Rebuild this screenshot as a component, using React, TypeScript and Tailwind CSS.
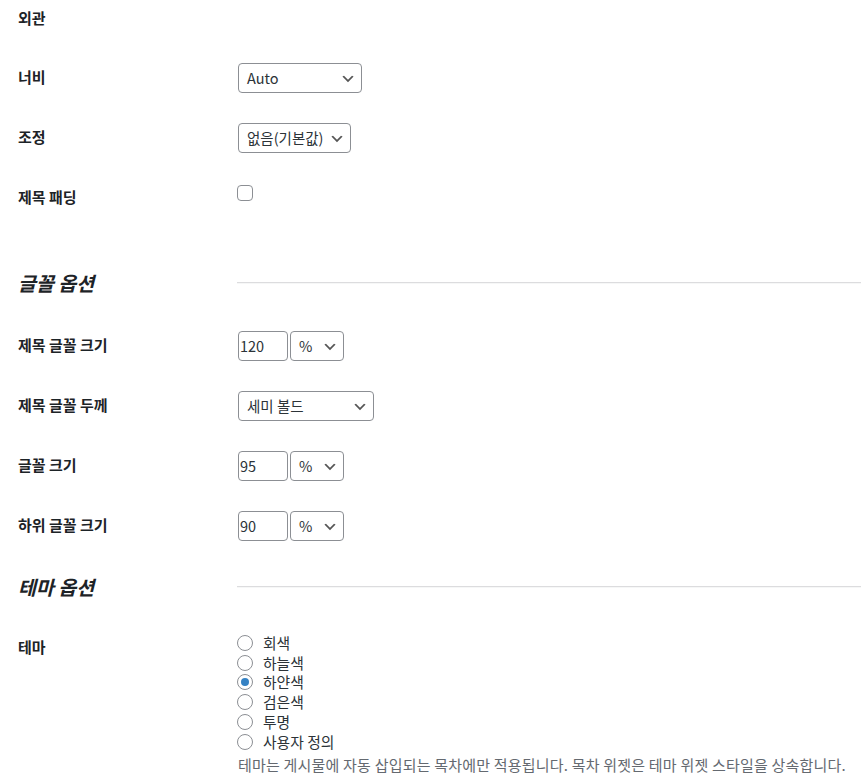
import type { ReactNode } from "react";

const font = { fontFamily: '"Noto Sans CJK KR", "Noto Sans", sans-serif' };

function Chevron() {
  return (
    <svg viewBox="0 0 20 20" className="pointer-events-none absolute right-[6px] top-[8px] h-4 w-4" fill="#555">
      <path d="M5 6l5 5 5-5 2 1-7 7-7-7 2-1z" />
    </svg>
  );
}

function Select({ value, className }: { value: string; className: string }) {
  return (
    <div className={`relative h-[30px] ${className}`}>
      <div className="flex h-full w-full items-center rounded-[4px] border border-[#8c8f94] bg-white pl-[8px] pr-[24px] text-[14.5px] text-[#2c3338] whitespace-nowrap">
        {value}
      </div>
      <Chevron />
    </div>
  );
}

function NumberField({ value }: { value: string }) {
  return (
    <div className="flex h-[30px] w-[50px] items-center rounded-[4px] border border-[#8c8f94] bg-white pl-[1px] text-[14.5px] text-[#2c3338]">
      {value}
    </div>
  );
}

function Row({ label, children, className = "" }: { label: string; children?: ReactNode; className?: string }) {
  return (
    <div className={`flex ${className}`}>
      <div className="w-[220px] shrink-0 py-[20px] text-[15px] leading-[18.2px] font-semibold text-[#1d2327]">{label}</div>
      <div className="py-[15px] text-[14px] leading-[18.2px]">{children}</div>
    </div>
  );
}

function Heading({ title, className = "" }: { title: string; className?: string }) {
  return (
    <div className={`flex items-center ${className}`}>
      <h2 className="w-[219px] shrink-0 text-[19.5px] italic font-semibold text-[#1d2327]">{title}</h2>
      <div className="h-0 flex-1 border-t border-b border-t-[#dcdcde] border-b-[#f6f7f7]" />
    </div>
  );
}

function Radio({ label, checked = false }: { label: string; checked?: boolean }) {
  return (
    <div className="flex h-[19.8px] items-center">
      <span className="-ml-[1px] flex h-4 w-4 items-center justify-center rounded-full border border-[#8c8f94] bg-white">
        {checked && <span className="h-2 w-2 rounded-full bg-[#3582c4]" />}
      </span>
      <span className="ml-[10px] text-[14.8px] text-[#2c3338]">{label}</span>
    </div>
  );
}

export default function App() {
  const themes = ["회색", "하늘색", "하얀색", "검은색", "투명", "사용자 정의"];
  return (
    <div className="min-h-screen bg-white pl-[18px] overflow-hidden" style={font}>
      <div className="flex h-[48px]">
        <div className="pt-[9px] text-[15px] leading-[18.2px] font-semibold text-[#1d2327]">외관</div>
      </div>

      <Row label="너비">
        <Select value="Auto" className="w-[124px]" />
      </Row>
      <Row label="조정">
        <Select value="없음(기본값)" className="w-[113px]" />
      </Row>
      <Row label="제목 패딩" className="h-[84px]">
        <span className="-ml-[1px] mt-[2px] block h-4 w-4 rounded-[4px] border border-[#8c8f94] bg-white" />
      </Row>

      <Heading title="글꼴 옵션" className="h-[64px] pb-[2px]" />

      <Row label="제목 글꼴 크기">
        <div className="flex gap-[2px]">
          <NumberField value="120" />
          <Select value="%" className="w-[54px]" />
        </div>
      </Row>
      <Row label="제목 글꼴 두께">
        <Select value="세미 볼드" className="w-[136px]" />
      </Row>
      <Row label="글꼴 크기">
        <div className="flex gap-[2px]">
          <NumberField value="95" />
          <Select value="%" className="w-[54px]" />
        </div>
      </Row>
      <Row label="하위 글꼴 크기">
        <div className="flex gap-[2px]">
          <NumberField value="90" />
          <Select value="%" className="w-[54px]" />
        </div>
      </Row>

      <Heading title="테마 옵션" className="h-[62px]" />

      <Row label="테마">
        <div className="flex flex-col">
          {themes.map((t) => (
            <Radio key={t} label={t} checked={t === "하얀색"} />
          ))}
        </div>
        <p className="mt-[4px] whitespace-nowrap text-[15px] tracking-[0.2px] leading-[18.2px] text-[#646970]">
          테마는 게시물에 자동 삽입되는 목차에만 적용됩니다. 목차 위젯은 테마 위젯 스타일을 상속합니다.
        </p>
      </Row>
    </div>
  );
}
